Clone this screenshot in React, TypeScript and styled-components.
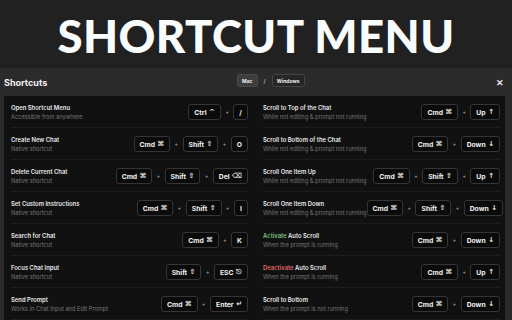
import React from 'react';
import styled, { createGlobalStyle } from 'styled-components';

const GlobalStyle = createGlobalStyle`
  html, body {
    margin: 0;
    padding: 0;
    background: #212121;
    overflow: hidden;
  }
  * { box-sizing: border-box; }
`;

type Accent = 'green' | 'red';

type KeyCap = [string, string?];

type Shortcut = {
  title: string;
  accent?: { word: string; tone: Accent };
  sub: string;
  keys: KeyCap[];
};

const CMD: KeyCap = ['Cmd', '⌘'];
const SHIFT: KeyCap = ['Shift', '⇧'];
const UP: KeyCap = ['Up', '↑'];
const DOWN: KeyCap = ['Down', '↓'];

const left: Shortcut[] = [
  { title: 'Open Shortcut Menu', sub: 'Accessible from anywhere', keys: [['Ctrl', '^'], ['/']] },
  { title: 'Create New Chat', sub: 'Native shortcut', keys: [CMD, SHIFT, ['O']] },
  { title: 'Delete Current Chat', sub: 'Native shortcut', keys: [CMD, SHIFT, ['Del', '⌫']] },
  { title: 'Set Custom Instructions', sub: 'Native shortcut', keys: [CMD, SHIFT, ['I']] },
  { title: 'Search for Chat', sub: 'Native shortcut', keys: [CMD, ['K']] },
  { title: 'Focus Chat Input', sub: 'Native shortcut', keys: [SHIFT, ['ESC', '⎋']] },
  { title: 'Send Prompt', sub: 'Works in Chat Input and Edit Prompt', keys: [CMD, ['Enter', '↵']] },
];

const right: Shortcut[] = [
  { title: 'Scroll to Top of the Chat', sub: 'While not editing & prompt not running', keys: [CMD, UP] },
  { title: 'Scroll to Bottom of the Chat', sub: 'While not editing & prompt not running', keys: [CMD, DOWN] },
  { title: 'Scroll One Item Up', sub: 'While not editing & prompt not running', keys: [CMD, SHIFT, UP] },
  { title: 'Scroll One Item Down', sub: 'While not editing & prompt not running', keys: [CMD, SHIFT, DOWN] },
  { title: ' Auto Scroll', accent: { word: 'Activate', tone: 'green' }, sub: 'When the prompt is running', keys: [CMD, DOWN] },
  { title: ' Auto Scroll', accent: { word: 'Deactivate', tone: 'red' }, sub: 'When the prompt is running', keys: [CMD, UP] },
  { title: 'Scroll to Bottom', sub: 'When the prompt is not running', keys: [CMD, DOWN] },
];

const rows = left.flatMap((l, i) => [l, right[i]]);

const App: React.FC = () => {
  return (
    <>
      <GlobalStyle />
      <Page>
        <Banner>SHORTCUT MENU</Banner>
        <Panel>
          <Header>
            <HeaderTitle>Shortcuts</HeaderTitle>
            <Toggle>
              <ToggleButton $active>Mac</ToggleButton>
              <Slash>/</Slash>
              <ToggleButton>Windows</ToggleButton>
            </Toggle>
            <Close>✕</Close>
          </Header>
          <Grid>
            {rows.map((s, i) => (
              <Row key={i}>
                <Info>
                  <Title>
                    {s.accent && <AccentWord $tone={s.accent.tone}>{s.accent.word}</AccentWord>}
                    {s.title}
                  </Title>
                  <Sub>{s.sub}</Sub>
                </Info>
                <Keys>
                  {s.keys.map(([label, symbol], j) => (
                    <React.Fragment key={j}>
                      {j > 0 && <Plus>+</Plus>}
                      <Key>
                        {label}
                        {symbol && <Symbol>{symbol}</Symbol>}
                      </Key>
                    </React.Fragment>
                  ))}
                </Keys>
              </Row>
            ))}
          </Grid>
        </Panel>
      </Page>
    </>
  );
};

export default App;

const Page = styled.div`
  width: 512px;
  height: 320px;
  display: flex;
  flex-direction: column;
  background: #212121;
  font-family: Inter, 'Liberation Sans', sans-serif;
`;

const Banner = styled.div`
  height: 68px;
  display: flex;
  align-items: center;
  justify-content: center;
  color: #f8fcfc;
  font-family: Lato, 'Liberation Sans', sans-serif;
  font-weight: 900;
  font-size: 45.5px;
  letter-spacing: 0.4px;
  padding-top: 2px;
`;

const Panel = styled.div`
  flex: 1;
  background: #2b2b2b;
  display: flex;
  flex-direction: column;
  padding: 0 7px 0 4px;
  overflow: hidden;
`;

const Header = styled.div`
  height: 30px;
  display: flex;
  align-items: center;
  position: relative;
`;

const HeaderTitle = styled.div`
  color: #f2f2f2;
  font-size: 9px;
  font-weight: 700;
  flex: 1;
`;

const Toggle = styled.div`
  position: absolute;
  left: 233px;
  top: 6px;
  display: flex;
  align-items: center;
  gap: 6px;
`;

const ToggleButton = styled.div<{ $active?: boolean }>`
  height: 13px;
  padding: 0 4px;
  display: flex;
  align-items: center;
  border-radius: 3px;
  border: 1px solid ${(p) => (p.$active ? '#4a4a4a' : '#444')};
  background: ${(p) => (p.$active ? '#3d3d3d' : '#262626')};
  color: #f0f0f0;
  font-size: 5px;
  font-weight: 700;
`;

const Slash = styled.span`
  color: #ddd;
  font-size: 6px;
`;

const Close = styled.div`
  color: #e8e8e8;
  font-size: 9px;
  font-weight: 700;
  margin-right: 1px;
`;

const Grid = styled.div`
  display: grid;
  grid-template-columns: minmax(0, 1fr) minmax(0, 1fr);
  column-gap: 15px;
  background: #111111;
  padding: 0 5px 0 7px;
`;

const Row = styled.div`
  height: 32px;
  display: flex;
  align-items: center;
  justify-content: space-between;
  border-bottom: 1px solid #1d1d1d;
  padding-top: 1px;
`;

const Info = styled.div`
  display: flex;
  flex-direction: column;
  gap: 2.5px;
  white-space: nowrap;
`;

const Title = styled.div`
  color: #e8e8e8;
  font-size: 5.9px;
  font-weight: 600;
`;

const AccentWord = styled.span<{ $tone: Accent }>`
  color: ${(p) => (p.$tone === 'green' ? '#7cc27c' : '#e06565')};
`;

const Sub = styled.div`
  color: #747474;
  font-size: 5.7px;
`;

const Keys = styled.div`
  display: flex;
  align-items: center;
  gap: 4.5px;
  flex-shrink: 0;
`;

const Key = styled.div`
  height: 16px;
  min-width: 14px;
  padding: 0 5px;
  display: flex;
  align-items: center;
  justify-content: center;
  gap: 2.5px;
  border: 1px solid #353535;
  border-radius: 3px;
  background: #0b0b0b;
  color: #f2f2f2;
  font-size: 6.8px;
  font-weight: 700;
  white-space: nowrap;
`;

const Symbol = styled.span`
  font-family: 'DejaVu Sans', sans-serif;
  font-size: 7px;
  font-weight: 700;
  line-height: 1;
`;

const Plus = styled.span`
  color: #9a9a9a;
  font-size: 5px;
  font-weight: 700;
`;
